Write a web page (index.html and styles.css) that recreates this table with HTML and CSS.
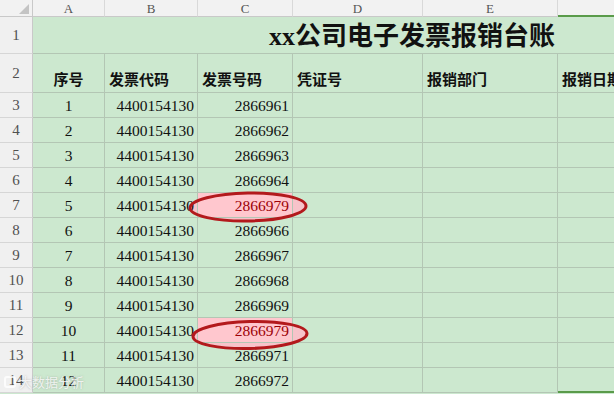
FILE: index.html
```html
<!DOCTYPE html>
<html lang="zh">
<head>
<meta charset="utf-8">
<title>xx公司电子发票报销台账</title>
<link rel="stylesheet" href="styles.css">
</head>
<body>
<div class="page">
  <svg class="fills" width="614" height="394" viewBox="0 0 614 394">
    <ellipse cx="248" cy="207" rx="58" ry="14" transform="rotate(-1 248 207)" fill="#f7c3ca"/>
    <ellipse cx="250" cy="335" rx="57" ry="13.5" transform="rotate(-1.5 250 335)" fill="#f7c3ca"/>
  </svg>

  <div class="sheet">
    <div class="corner"><span class="tri"></span></div>
    <div class="colhead">A</div>
    <div class="colhead">B</div>
    <div class="colhead">C</div>
    <div class="colhead">D</div>
    <div class="colhead">E</div>
    <div class="colhead sel"></div>

    <div class="rowhead">1</div>
    <div class="title">xx公司电子发票报销台账</div>

    <div class="rowhead">2</div>
    <div class="cell lbl center">序号</div>
    <div class="cell lbl">发票代码</div>
    <div class="cell lbl">发票号码</div>
    <div class="cell lbl">凭证号</div>
    <div class="cell lbl">报销部门</div>
    <div class="cell lbl">报销日期</div>

    <div class="rowhead">3</div><div class="cell num center">1</div><div class="cell num right">4400154130</div><div class="cell num right">2866961</div><div class="cell"></div><div class="cell"></div><div class="cell"></div>
    <div class="rowhead">4</div><div class="cell num center">2</div><div class="cell num right">4400154130</div><div class="cell num right">2866962</div><div class="cell"></div><div class="cell"></div><div class="cell"></div>
    <div class="rowhead">5</div><div class="cell num center">3</div><div class="cell num right">4400154130</div><div class="cell num right">2866963</div><div class="cell"></div><div class="cell"></div><div class="cell"></div>
    <div class="rowhead">6</div><div class="cell num center">4</div><div class="cell num right">4400154130</div><div class="cell num right">2866964</div><div class="cell"></div><div class="cell"></div><div class="cell"></div>
    <div class="rowhead">7</div><div class="cell num center">5</div><div class="cell num right">4400154130</div><div class="cell num right dup">2866979</div><div class="cell"></div><div class="cell"></div><div class="cell"></div>
    <div class="rowhead">8</div><div class="cell num center">6</div><div class="cell num right">4400154130</div><div class="cell num right">2866966</div><div class="cell"></div><div class="cell"></div><div class="cell"></div>
    <div class="rowhead">9</div><div class="cell num center">7</div><div class="cell num right">4400154130</div><div class="cell num right">2866967</div><div class="cell"></div><div class="cell"></div><div class="cell"></div>
    <div class="rowhead">10</div><div class="cell num center">8</div><div class="cell num right">4400154130</div><div class="cell num right">2866968</div><div class="cell"></div><div class="cell"></div><div class="cell"></div>
    <div class="rowhead">11</div><div class="cell num center">9</div><div class="cell num right">4400154130</div><div class="cell num right">2866969</div><div class="cell"></div><div class="cell"></div><div class="cell"></div>
    <div class="rowhead">12</div><div class="cell num center">10</div><div class="cell num right">4400154130</div><div class="cell num right dup">2866979</div><div class="cell"></div><div class="cell"></div><div class="cell"></div>
    <div class="rowhead">13</div><div class="cell num center">11</div><div class="cell num right">4400154130</div><div class="cell num right">2866971</div><div class="cell"></div><div class="cell"></div><div class="cell"></div>
    <div class="rowhead">14</div><div class="cell num center">12</div><div class="cell num right">4400154130</div><div class="cell num right">2866972</div><div class="cell"></div><div class="cell"></div><div class="cell selbottom"></div>
  </div>

  <svg class="marks" width="614" height="394" viewBox="0 0 614 394">
    <ellipse cx="248" cy="207" rx="58" ry="14" transform="rotate(-1 248 207)" fill="none" stroke="#b3191c" stroke-width="3"/>
    <ellipse cx="250" cy="335" rx="57" ry="13.5" transform="rotate(-1.5 250 335)" fill="none" stroke="#b3191c" stroke-width="3"/>
  </svg>

  <div class="watermark"><span class="wm-icon"></span>大数据分析</div>
</div>
</body>
</html>
```

FILE: styles.css
```css
html, body {
  margin: 0;
  padding: 0;
  overflow: hidden;
  background: #cce8cf;
}

.page {
  position: relative;
  width: 614px;
  height: 394px;
  overflow: hidden;
  background: #cce8cf;
}

.fills {
  position: absolute;
  left: 0;
  top: 0;
  z-index: 0;
}

.sheet {
  position: relative;
  z-index: 1;
  display: grid;
  grid-template-columns: 33px 72px 93px 95px 130px 135px 100px;
  grid-template-rows: 17px 37px 39px repeat(12, 25px);
  width: 658px;
}

.corner {
  background: #f2f2f2;
  border-right: 1px solid #c9c9c9;
  border-bottom: 1px solid #c9c9c9;
  box-sizing: border-box;
  position: relative;
}

.tri {
  position: absolute;
  right: 3px;
  bottom: 2px;
  width: 0;
  height: 0;
  border-left: 10px solid transparent;
  border-bottom: 10px solid #c4c4c4;
}

.colhead {
  background: #f2f2f2;
  border-right: 1px solid #d9d9d9;
  border-bottom: 1px solid #c9c9c9;
  box-sizing: border-box;
  display: flex;
  align-items: center;
  justify-content: center;
  font-family: "Liberation Serif", serif;
  font-size: 13px;
  color: #555;
  line-height: 1;
}

.colhead.sel {
  border-bottom: 2px solid #5a9b4a;
}

.rowhead {
  background: #f0f0f0;
  border-right: 1px solid #c9c9c9;
  border-bottom: 1px solid #d6d6d6;
  box-sizing: border-box;
  display: flex;
  align-items: center;
  justify-content: center;
  font-family: "Liberation Serif", serif;
  font-size: 15px;
  color: #505050;
  line-height: 1;
}

.title {
  grid-column: span 6;
  border-bottom: 1px solid #b3c6b4;
  box-sizing: border-box;
  display: flex;
  align-items: flex-end;
  padding-left: 236px;
  padding-bottom: 3px;
  font-family: "Liberation Serif", "Noto Sans CJK SC", serif;
  font-weight: 700;
  font-size: 26px;
  line-height: 1;
  color: #111;
  white-space: nowrap;
}

.cell {
  border-right: 1px solid #b3c6b4;
  border-bottom: 1px solid #b3c6b4;
  box-sizing: border-box;
  display: flex;
  align-items: flex-end;
  padding: 0 3px 2px 4px;
  color: #111;
  white-space: nowrap;
  min-width: 0;
  overflow: visible;
}

.lbl {
  font-family: "Noto Sans CJK SC", sans-serif;
  font-weight: 700;
  font-size: 15px;
  line-height: 1;
  padding-bottom: 6px;
}

.num {
  font-family: "Liberation Serif", serif;
  font-size: 15.5px;
  line-height: 1;
  padding-bottom: 4px;
}

.center { justify-content: center; padding-left: 0; padding-right: 0; }
.right { justify-content: flex-end; }

.dup {
  background: #ffc7ce;
  color: #9c0006;
}

.selbottom {
  border-bottom: 2px solid #5a9b4a;
}

.marks {
  position: absolute;
  left: 0;
  top: 0;
  z-index: 2;
  pointer-events: none;
}

.watermark {
  position: absolute;
  z-index: 3;
  left: 4px;
  bottom: 3px;
  display: flex;
  align-items: center;
  gap: 3px;
  font-family: "Noto Sans CJK SC", sans-serif;
  font-size: 13px;
  color: rgba(255, 255, 255, 0.8);
  text-shadow: 0 0 2px rgba(120, 120, 120, 0.5);
}

.wm-icon {
  width: 12px;
  height: 12px;
  border: 2px solid rgba(255, 255, 255, 0.8);
  border-radius: 3px;
  box-sizing: border-box;
}
```
